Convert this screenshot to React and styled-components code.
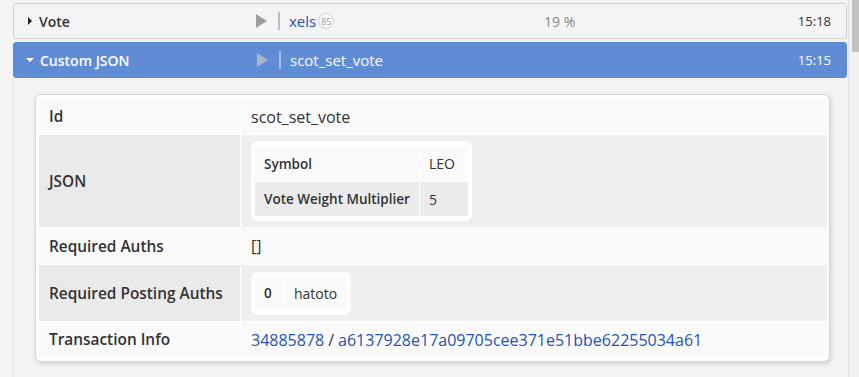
import styled, { createGlobalStyle } from "styled-components";

const GlobalStyle = createGlobalStyle`
  body {
    margin: 0;
    background: #f4f4f4;
    font-family: "Open Sans", "Liberation Sans", sans-serif;
    color: #333;
  }
`;

const Page = styled.div`
  display: flex;
  height: 377px;
  overflow: hidden;
`;

const Main = styled.main`
  flex: 1;
  display: flex;
  flex-direction: column;
  padding: 3px 1px 0 13px;
`;

const Scrollbar = styled.div`
  width: 10px;
  border-left: 1px solid #e2e2e2;
  background: #f1f1f1;
  display: flex;
  justify-content: flex-end;
`;

const Thumb = styled.div`
  width: 7px;
  height: 52px;
  background: #c1c1c1;
`;

const OpRow = styled.div`
  display: flex;
  align-items: center;
  height: 36px;
  box-sizing: border-box;
  border: 1px solid ${({ active }) => (active ? "#5b88d2" : "#cfcfcf")};
  border-radius: 3px;
  background: ${({ active }) => (active ? "#5f8cd5" : "#f4f4f4")};
  color: ${({ active }) => (active ? "#fff" : "#333")};
  font-size: 14px;
  & + & {
    margin-top: 3px;
  }
`;

const Caret = styled.span`
  width: 0;
  height: 0;
  margin: 0 7px 0 14px;
  border-style: solid;
  border-color: transparent;
  ${({ open, active }) =>
    open
      ? `border-width: 4px 4px 0 4px; border-top-color: ${active ? "#fff" : "#222"}; margin-left: 12px; margin-right: 6px;`
      : `border-width: 4px 0 4px 4px; border-left-color: #222;`}
`;

const Title = styled.span`
  font-weight: 600;
  width: 217px;
`;

const Play = styled.span`
  width: 0;
  height: 0;
  border-style: solid;
  border-color: transparent;
  border-width: 7px 0 7px 11px;
  border-left-color: ${({ active }) => (active ? "#aab6c9" : "#9d9d9d")};
`;

const Sep = styled.span`
  width: 2px;
  height: 18px;
  margin: 0 9px 0 11px;
  background: ${({ active }) => (active ? "#a7bde2" : "#b4c0d2")};
`;

const Subject = styled.span`
  width: 255px;
  display: flex;
  align-items: center;
  font-size: 15px;
  color: ${({ active }) => (active ? "#fff" : "#2455b0")};
`;

const Badge = styled.span`
  display: inline-flex;
  align-items: center;
  justify-content: center;
  width: 14px;
  height: 14px;
  margin-left: 2px;
  border: 1px solid #cdcdcd;
  border-radius: 50%;
  background: #fafafa;
  color: #999;
  font-size: 9px;
`;

const Percent = styled.span`
  flex: 1;
  color: #888;
`;

const Time = styled.span`
  margin-right: 15px;
  font-size: 13px;
`;

const Detail = styled.section`
  flex: 1;
  border-left: 1px solid #e3e3e3;
  background: #f3f3f3;
  padding: 16px 17px 0 21px;
`;

const Card = styled.div`
  background: #fff;
  border: 1px solid #d6d6d6;
  border-radius: 6px;
  box-shadow: 1px 2px 5px rgba(0, 0, 0, 0.14);
  padding: 4px 2px 4px 3px;
`;

const Table = styled.div`
  display: grid;
  grid-template-columns: 201px 1fr;
  gap: 1px;
  font-size: 16px;
`;

const Label = styled.div`
  display: flex;
  align-items: center;
  min-height: ${({ h }) => h || 35}px;
  padding-left: 10px;
  font-size: 15.4px;
  font-weight: 600;
  background: ${({ alt }) => (alt ? "#eaeaea" : "#fafafa")};
`;

const Value = styled.div`
  display: flex;
  align-items: center;
  padding-left: 10px;
  background: ${({ alt }) => (alt ? "#efefef" : "#fafafa")};
`;

const Nested = styled.div`
  background: #fff;
  border-radius: 7px;
  padding: 5px 4px;
  display: grid;
  grid-template-columns: ${({ cols }) => cols};
  gap: 1px;
  font-size: 14px;
`;

const NCell = styled.div`
  display: flex;
  align-items: center;
  white-space: nowrap;
  height: ${({ h }) => h || 35}px;
  padding: 0 9px;
  font-size: ${({ bold }) => (bold ? "13.5px" : "14px")};
  font-weight: ${({ bold }) => (bold ? 600 : 400)};
  background: ${({ alt }) => (alt ? "#ebebeb" : "#fafafa")};
`;

const Link = styled.a`
  color: #2455b0;
  text-decoration: none;
`;

const Slash = styled.span`
  margin: 0 4px;
`;

export default function App() {
  return (
    <Page>
      <GlobalStyle />
      <Main>
        <OpRow>
          <Caret />
          <Title>Vote</Title>
          <Play />
          <Sep />
          <Subject>
            xels<Badge>85</Badge>
          </Subject>
          <Percent>19 %</Percent>
          <Time>15:18</Time>
        </OpRow>
        <OpRow active>
          <Caret open active />
          <Title>Custom JSON</Title>
          <Play active />
          <Sep active />
          <Subject active>scot_set_vote</Subject>
          <Percent />
          <Time>15:15</Time>
        </OpRow>
        <Detail>
          <Card>
            <Table>
              <Label>Id</Label>
              <Value>scot_set_vote</Value>

              <Label alt h={92}>JSON</Label>
              <Value alt>
                <Nested cols="164px 48px">
                  <NCell bold>Symbol</NCell>
                  <NCell>LEO</NCell>
                  <NCell bold alt h={34}>Vote Weight Multiplier</NCell>
                  <NCell alt h={34}>5</NCell>
                </Nested>
              </Value>

              <Label h={36}>Required Auths</Label>
              <Value>[]</Value>

              <Label alt h={56}>Required Posting Auths</Label>
              <Value alt>
                <Nested cols="29px 62px">
                  <NCell bold h={33}>0</NCell>
                  <NCell h={33}>hatoto</NCell>
                </Nested>
              </Value>

              <Label>Transaction Info</Label>
              <Value>
                <Link href="#">34885878</Link>
                <Slash>/</Slash>
                <Link href="#">a6137928e17a09705cee371e51bbe62255034a61</Link>
              </Value>
            </Table>
          </Card>
        </Detail>
      </Main>
      <Scrollbar>
        <Thumb />
      </Scrollbar>
    </Page>
  );
}
